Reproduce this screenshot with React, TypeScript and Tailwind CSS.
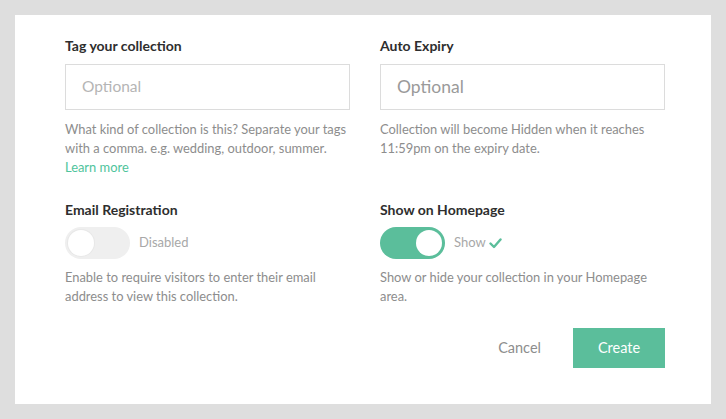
import React from "react";

const GREEN = "#5bbe9b";

function Toggle({ on }: { on: boolean }) {
  return (
    <div
      className={
        on
          ? "flex h-[32px] w-[65px] items-center justify-end rounded-full bg-[#5bbe9b] px-[3px]"
          : "flex h-[32px] w-[65px] items-center justify-start rounded-full bg-[#efefef] px-[3px]"
      }
    >
      <div
        className={
          on
            ? "h-[26px] w-[26px] rounded-full bg-white"
            : "h-[26px] w-[26px] rounded-full bg-white shadow-[0_0_0_1px_#e8e8e8]"
        }
      />
    </div>
  );
}

function Label({ children }: { children: React.ReactNode }) {
  return <div className="text-[14px] font-bold leading-[18px] text-[#2e2e2e]">{children}</div>;
}

function Help({ children }: { children: React.ReactNode }) {
  return <p className="text-[12.9px] leading-[19px] text-[#8d8d8d]">{children}</p>;
}

export default function App() {
  return (
    <div
      className="h-[419px] w-full overflow-hidden bg-[#dedede] p-[15px]"
      style={{ fontFamily: "Lato, 'Open Sans', sans-serif" }}
    >
      <div className="bg-white pb-[36px] pl-[50px] pr-[46px] pt-[22px]">
        <div className="grid grid-cols-2 gap-x-[30px] gap-y-[24px]">
          <div>
            <Label>Tag your collection</Label>
            <div className="mt-[9px] flex h-[46px] items-center border border-[#dcdcdc] px-[16px] text-[15.5px] text-[#b5b5b5]">
              Optional
            </div>
            <div className="mt-[10px]">
              <Help>
                What kind of collection is this? Separate your tags with a comma. e.g. wedding, outdoor, summer.
              </Help>
              <a className="block text-[12.9px] leading-[19px] text-[#4fc49c]" href="#">
                Learn more
              </a>
            </div>
          </div>
          <div>
            <Label>Auto Expiry</Label>
            <div className="mt-[9px] flex h-[46px] items-center border border-[#dcdcdc] px-[16px] text-[17.5px] text-[#9a9a9a]">
              Optional
            </div>
            <div className="mt-[10px]">
              <Help>Collection will become Hidden when it reaches 11:59pm on the expiry date.</Help>
            </div>
          </div>
          <div>
            <Label>Email Registration</Label>
            <div className="mt-[8px] flex items-center gap-[9px]">
              <Toggle on={false} />
              <span className="text-[13px] text-[#a8a8a8]">Disabled</span>
            </div>
            <div className="mt-[9px]">
              <Help>Enable to require visitors to enter their email address to view this collection.</Help>
            </div>
          </div>
          <div>
            <Label>Show on Homepage</Label>
            <div className="mt-[8px] flex items-center gap-[9px]">
              <Toggle on={true} />
              <span className="flex items-center gap-[3px] text-[13px] text-[#a8a8a8]">
                Show
                <svg width="13" height="11" viewBox="0 0 13 11" fill="none">
                  <path d="M1.5 5.5 L5 9 L11.5 1.5" stroke={GREEN} strokeWidth="2.4" strokeLinecap="round" strokeLinejoin="round" />
                </svg>
              </span>
            </div>
            <div className="mt-[9px]">
              <Help>Show or hide your collection in your Homepage area.</Help>
            </div>
          </div>
        </div>
        <div className="mt-[22px] flex items-center justify-end">
          <button className="mr-[32px] text-[14.5px] text-[#8d8d8d]">Cancel</button>
          <button className="h-[40px] w-[92px] bg-[#5bbe9b] text-[14.5px] text-white">Create</button>
        </div>
      </div>
    </div>
  );
}
